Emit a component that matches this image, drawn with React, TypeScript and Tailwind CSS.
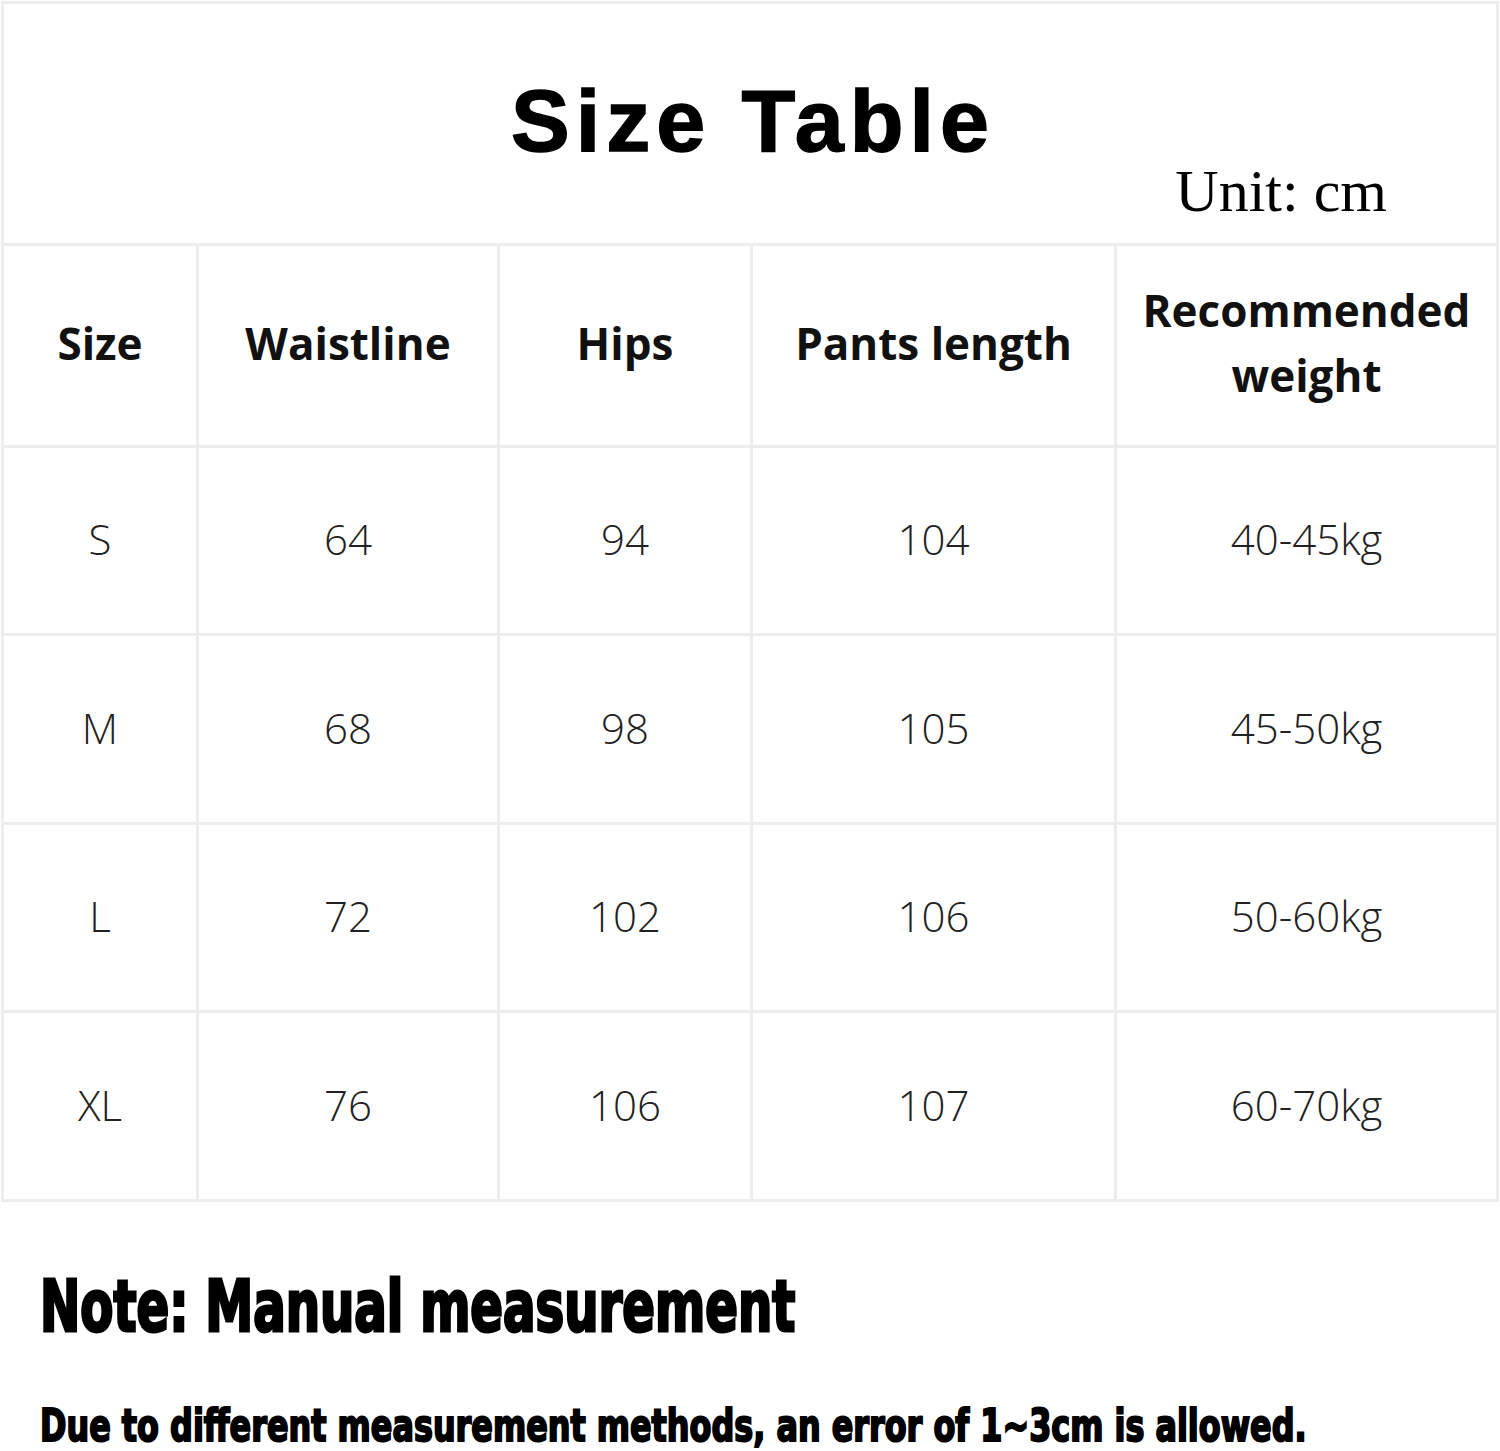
const rows = [
  ['S', '64', '94', '104', '40-45kg'],
  ['M', '68', '98', '105', '45-50kg'],
  ['L', '72', '102', '106', '50-60kg'],
  ['XL', '76', '106', '107', '60-70kg'],
];

const widths = ['w-[195px]', 'w-[301px]', 'w-[253px]', 'w-[364px]', 'flex-1'];
const rowHeights = ['h-[188px]', 'h-[189px]', 'h-[188px]', 'h-[189px]'];

const cellFont = { fontFamily: '"Open Sans", "Noto Sans", sans-serif' };

export default function App() {
  return (
    <div className="w-[1500px] h-[1451px] bg-white overflow-hidden">
      <div className="ml-[1px] mt-[1px] w-[1498px] border-x-[3px] border-t-[3px] border-[#ededed]">
        {/* title row */}
        <div className="h-[242px] border-b-[3px] border-[#ededed] flex flex-col">
          <h1 className="pt-[73px] pl-[6px] text-center text-[88px] leading-none font-bold tracking-[6px] text-black font-['Liberation_Sans',Arial,sans-serif] [-webkit-text-stroke:1.5px_black]">
            Size Table
          </h1>
          <div className="-mt-[4px] pr-[109px] text-right text-[60px] leading-none text-black font-['Liberation_Serif','Times_New_Roman',serif]">
            Unit: cm
          </div>
        </div>

        {/* header row */}
        <div className="flex h-[202px] border-b-[3px] border-[#ededed]" style={cellFont}>
          {['Size', 'Waistline', 'Hips', 'Pants length'].map((h, i) => (
            <div key={h} className={`${widths[i]} border-r-[3px] border-[#ededed] flex items-center justify-center pb-[6px] text-[44px] font-bold text-[#111]`}>
              {h}
            </div>
          ))}
          <div className="flex-1 flex flex-col items-center justify-center pb-[6px] text-[44px] leading-[65px] font-bold text-[#111] text-center">
            <span>Recommended</span>
            <span>weight</span>
          </div>
        </div>

        {rows.map((r, ri) => (
          <div key={r[0]} className={`flex ${rowHeights[ri]} border-b-[3px] border-[#ededed]`} style={cellFont}>
            {r.map((v, i) => (
              <div
                key={i}
                className={`${widths[i]} ${i < 4 ? 'border-r-[3px] border-[#ededed]' : ''} flex items-center justify-center pb-[4px] text-[42px] font-light text-[#222]`}
              >
                {v}
              </div>
            ))}
          </div>
        ))}
      </div>

      <div className="pl-[40px] pt-[68px] font-['DejaVu_Sans_Condensed','DejaVu_Sans',sans-serif] font-bold text-black">
        <p className="w-max origin-left scale-x-[0.744] whitespace-nowrap text-[72px] leading-none [-webkit-text-stroke:3px_black]">
          Note: Manual measurement
        </p>
        <p className="w-max origin-left scale-x-[0.805] whitespace-nowrap pt-[62px] text-[44px] leading-none [-webkit-text-stroke:2px_black]">
          Due to different measurement methods, an error of 1~3cm is allowed.
        </p>
      </div>
    </div>
  );
}
